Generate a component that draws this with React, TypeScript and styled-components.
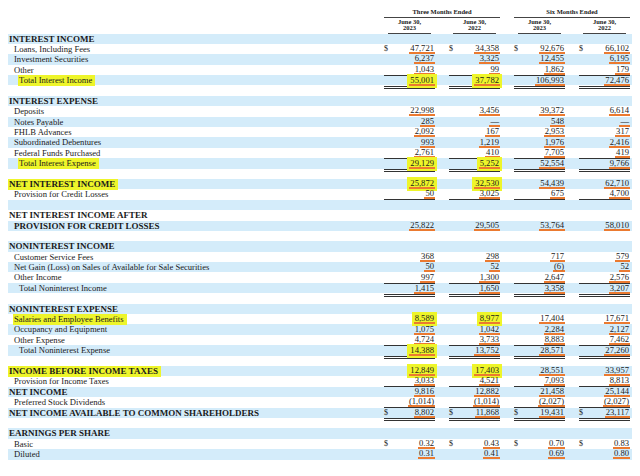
import React from 'react';
import styled, { createGlobalStyle } from 'styled-components';

const Global = createGlobalStyle`
  body { margin: 0; background: #fff; font-family: 'Liberation Serif', 'Times New Roman', serif; color: #1a1a1a; }
`;

type Line = 'none' | 'single' | 'double';
type RowData = {
  label?: string;
  bold?: boolean;
  indent?: number;
  hl?: boolean;
  values?: string[];
  dollar?: boolean;
  hlv?: boolean[];
  top?: Line;
  bottom?: Line;
};

const rows: RowData[] = [
  { label: 'INTEREST INCOME', bold: true },
  { label: 'Loans, Including Fees', indent: 1, values: ['47,721', '34,358', '92,676', '66,102'], dollar: true },
  { label: 'Investment Securities', indent: 1, values: ['6,237', '3,325', '12,455', '6,195'] },
  { label: 'Other', indent: 1, values: ['1,043', '99', '1,862', '179'] },
  { label: 'Total Interest Income', indent: 2, hl: true, values: ['55,001', '37,782', '106,993', '72,476'], hlv: [true, true], top: 'single', bottom: 'double' },
  {},
  { label: 'INTEREST EXPENSE', bold: true },
  { label: 'Deposits', indent: 1, values: ['22,998', '3,456', '39,372', '6,614'] },
  { label: 'Notes Payable', indent: 1, values: ['285', '—', '548', '—'] },
  { label: 'FHLB Advances', indent: 1, values: ['2,092', '167', '2,953', '317'] },
  { label: 'Subordinated Debentures', indent: 1, values: ['993', '1,219', '1,976', '2,416'] },
  { label: 'Federal Funds Purchased', indent: 1, values: ['2,761', '410', '7,705', '419'] },
  { label: 'Total Interest Expense', indent: 2, hl: true, values: ['29,129', '5,252', '52,554', '9,766'], hlv: [true, true], top: 'single', bottom: 'double' },
  {},
  { label: 'NET INTEREST INCOME', bold: true, hl: true, values: ['25,872', '32,530', '54,439', '62,710'], hlv: [true, true] },
  { label: 'Provision for Credit Losses', indent: 1, values: ['50', '3,025', '675', '4,700'], bottom: 'single' },
  {},
  { label: 'NET INTEREST INCOME AFTER', bold: true },
  { label: 'PROVISION FOR CREDIT LOSSES', bold: true, indent: 1, values: ['25,822', '29,505', '53,764', '58,010'] },
  {},
  { label: 'NONINTEREST INCOME', bold: true },
  { label: 'Customer Service Fees', indent: 1, values: ['368', '298', '717', '579'] },
  { label: 'Net Gain (Loss) on Sales of Available for Sale Securities', indent: 1, values: ['50', '52', '(6)', '52'] },
  { label: 'Other Income', indent: 1, values: ['997', '1,300', '2,647', '2,576'] },
  { label: 'Total Noninterest Income', indent: 2, values: ['1,415', '1,650', '3,358', '3,207'], top: 'single', bottom: 'double' },
  {},
  { label: 'NONINTEREST EXPENSE', bold: true },
  { label: 'Salaries and Employee Benefits', indent: 1, hl: true, values: ['8,589', '8,977', '17,404', '17,671'], hlv: [true, true] },
  { label: 'Occupancy and Equipment', indent: 1, values: ['1,075', '1,042', '2,284', '2,127'] },
  { label: 'Other Expense', indent: 1, values: ['4,724', '3,733', '8,883', '7,462'] },
  { label: 'Total Noninterest Expense', indent: 2, values: ['14,388', '13,752', '28,571', '27,260'], hlv: [true], top: 'single', bottom: 'double' },
  {},
  { label: 'INCOME BEFORE INCOME TAXES', bold: true, hl: true, values: ['12,849', '17,403', '28,551', '33,957'], hlv: [true, true] },
  { label: 'Provision for Income Taxes', indent: 1, values: ['3,033', '4,521', '7,093', '8,813'], bottom: 'single' },
  { label: 'NET INCOME', bold: true, values: ['9,816', '12,882', '21,458', '25,144'] },
  { label: 'Preferred Stock Dividends', indent: 1, values: ['(1,014)', '(1,014)', '(2,027)', '(2,027)'], bottom: 'single' },
  { label: 'NET INCOME AVAILABLE TO COMMON SHAREHOLDERS', bold: true, values: ['8,802', '11,868', '19,431', '23,117'], dollar: true, bottom: 'double' },
  {},
  { label: 'EARNINGS PER SHARE', bold: true },
  { label: 'Basic', indent: 1, values: ['0.32', '0.43', '0.70', '0.83'], dollar: true },
  { label: 'Diluted', indent: 1, values: ['0.31', '0.41', '0.69', '0.80'] },
];

const COLS = '362px 55px 55px 55px 55px';

const Page = styled.div`
  padding: 8px 0 0 8px;
  width: 632px;
  box-sizing: border-box;
`;

const HeadGrid = styled.div`
  display: grid;
  grid-template-columns: ${COLS};
  column-gap: 10px;
  font-size: 6.5px;
  line-height: 6.5px;
  text-align: center;
`;

const GroupTitle = styled.div<{ $col: number }>`
  grid-column: ${(p) => p.$col} / span 2;
  grid-row: 1;
  font-weight: bold;
  border-bottom: 1px solid #444;
  padding: 1px 0 1px;
  margin-bottom: 1px;
  margin-left: 4px;
`;

const SubHead = styled.div<{ $col: number }>`
  grid-column: ${(p) => p.$col};
  grid-row: 2;
  font-weight: bold;
  border-bottom: 1px solid #444;
  padding: 0 0 1px;
  margin: 0 4px 0 8px;
`;

const Row = styled.div<{ $alt: boolean }>`
  display: grid;
  grid-template-columns: ${COLS};
  column-gap: 10px;
  height: 10.4px;
  background: ${(p) => (p.$alt ? '#d4ecfa' : '#fff')};
  font-size: 8.6px;
  line-height: 10.4px;
  white-space: nowrap;
`;

const Label = styled.div<{ $bold?: boolean; $indent: number }>`
  padding-left: ${(p) => p.$indent * 5}px;
  font-weight: ${(p) => (p.$bold ? 'bold' : 'normal')};
  font-size: ${(p) => (p.$bold ? '9px' : '8.6px')};
`;

const Mark = styled.span<{ $on?: boolean }>`
  background: ${(p) => (p.$on ? '#eef52a' : 'transparent')};
  padding: 0 3px 1px 1px;
`;

const Cell = styled.div<{ $top: Line; $bottom: Line }>`
  display: flex;
  justify-content: space-between;
  align-items: center;
  border-top: ${(p) => (p.$top === 'single' ? '1px solid #333' : 'none')};
  border-bottom: ${(p) =>
    p.$bottom === 'double' ? '3px double #333' : p.$bottom === 'single' ? '1px solid #333' : 'none'};
  margin-left: 4px;
  box-sizing: border-box;
`;

const Dollar = styled.span`
  font-size: 8px;
`;

const Num = styled.span<{ $hl?: boolean }>`
  line-height: 8px;
  padding: 0 1px;
  border-bottom: 2px solid #eb7a30;
  background: ${(p) => (p.$hl ? '#eef52a' : 'transparent')};
  box-shadow: ${(p) => (p.$hl ? '0 0 0 2px #eef52a' : 'none')};
`;

export default function App() {
  return (
    <Page>
      <Global />
      <HeadGrid>
        <GroupTitle $col={2}>Three Months Ended</GroupTitle>
        <GroupTitle $col={4}>Six Months Ended</GroupTitle>
        {[2, 3, 4, 5].map((c, i) => (
          <SubHead key={c} $col={c}>
            June 30,
            <br />
            {i % 2 === 0 ? '2023' : '2022'}
          </SubHead>
        ))}
      </HeadGrid>
      {rows.map((r, i) => (
        <Row key={i} $alt={i % 2 === 0}>
          <Label $bold={r.bold} $indent={r.indent ?? 0}>
            {r.label && <Mark $on={r.hl}>{r.label}</Mark>}
          </Label>
          {r.values?.map((v, j) => (
            <Cell key={j} $top={r.top ?? 'none'} $bottom={r.bottom ?? 'none'}>
              <Dollar>{r.dollar ? '$' : ''}</Dollar>
              <Num $hl={r.hlv?.[j]}>{v}</Num>
            </Cell>
          ))}
        </Row>
      ))}
    </Page>
  );
}
